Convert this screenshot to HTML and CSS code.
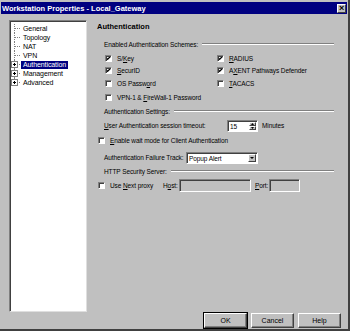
FILE: index.html
```html
<!DOCTYPE html>
<html lang="en">
<head>
    <meta charset="UTF-8">
    <link rel="stylesheet" href="styles.css">
    <title>Workstation Properties - Local_Gateway</title>
</head>
<body>
    <div class="window">
        <div class="titlebar">
            <span class="title">Workstation Properties - Local_Gateway</span>
            <span class="close">&#215;</span>
        </div>

        <div class="main">
            <div class="tree">
                <ul>
                    <li><span class="branch"></span><span class="label">General</span></li>
                    <li><span class="branch"></span><span class="label">Topology</span></li>
                    <li><span class="branch"></span><span class="label">NAT</span></li>
                    <li><span class="branch"></span><span class="label">VPN</span></li>
                    <li><span class="branch"><span class="plus"></span></span><span class="label selected">Authentication</span></li>
                    <li><span class="branch"><span class="plus"></span></span><span class="label">Management</span></li>
                    <li class="last"><span class="branch"><span class="plus"></span></span><span class="label">Advanced</span></li>
                </ul>
            </div>

            <div class="page">
                <div class="heading">Authentication</div>

                <div class="group-title first"><span>Enabled Authentication Schemes:</span><span class="rule"></span></div>
                <div class="schemes">
                    <label class="check"><span class="box on"></span><span>S/<u>K</u>ey</span></label>
                    <label class="check"><span class="box on"></span><span><u>R</u>ADIUS</span></label>
                    <label class="check"><span class="box on"></span><span><u>S</u>ecurID</span></label>
                    <label class="check"><span class="box on"></span><span>A<u>X</u>ENT Pathways Defender</span></label>
                    <label class="check"><span class="box"></span><span>OS Passw<u>o</u>rd</span></label>
                    <label class="check"><span class="box"></span><span><u>T</u>ACACS</span></label>
                    <label class="check"><span class="box"></span><span>VPN-1 &amp; <u>F</u>ireWall-1 Password</span></label>
                </div>

                <div class="group-title"><span>Authentication Settings:</span><span class="rule"></span></div>
                <div class="row timeout">
                    <span class="field-label wide"><u>U</u>ser Authentication session timeout:</span>
                    <span class="spin"><span class="value">15</span><span class="arrows"><span class="up"></span><span class="down"></span></span></span>
                    <span class="unit">Minutes</span>
                </div>
                <div class="row wait">
                    <label class="check"><span class="box"></span><span><u>E</u>nable wait mode for Client Authentication</span></label>
                </div>
                <div class="row track">
                    <span class="field-label">Authentication Failure Track:</span>
                    <span class="select"><span class="value">Popup Alert</span><span class="drop"></span></span>
                </div>

                <div class="group-title http"><span>HTTP Security Server:</span><span class="rule"></span></div>
                <div class="row proxy">
                    <label class="check"><span class="box"></span><span>Use <u>N</u>ext proxy</span></label>
                    <span class="host-label">H<u>o</u>st:</span>
                    <span class="text-box host"></span>
                    <span class="port-label"><u>P</u>ort:</span>
                    <span class="text-box port"></span>
                </div>
            </div>
        </div>

        <div class="footer">
            <button class="btn default">OK</button>
            <button class="btn">Cancel</button>
            <button class="btn">Help</button>
        </div>
    </div>
</body>
</html>
```

FILE: styles.css
```css
body {
    margin: 0;
    background-color: #c0c0c0;
    font-family: 'Liberation Sans', Arial, sans-serif;
    font-size: 6.5px;
    letter-spacing: -0.1px;
    color: #000;
}

.window {
    width: 350px;
    height: 331px;
    box-sizing: border-box;
    padding: 1px 1px 0 1px;
    border-right: 2px solid #404040;
    border-bottom: 2px solid #404040;
    background-color: #c0c0c0;
    display: flex;
    flex-direction: column;
}

/* title bar */
.titlebar {
    height: 12px;
    margin-top: 1px;
    background-color: #000080;
    display: flex;
    align-items: center;
    justify-content: space-between;
    padding: 0 1px 0 1px;
}

.title {
    color: #fff;
    font-weight: bold;
    font-size: 7.5px;
    letter-spacing: 0;
}

.close {
    width: 9px;
    height: 9px;
    box-sizing: border-box;
    background-color: #c0c0c0;
    border: 1px solid;
    border-color: #fff #404040 #404040 #fff;
    font-size: 9px;
    font-weight: bold;
    line-height: 6px;
    text-align: center;
    color: #000;
}

/* main area */
.main {
    display: flex;
    margin-top: 6px;
    padding-left: 8px;
    height: 292px;
}

.tree {
    width: 78px;
    height: 292px;
    box-sizing: border-box;
    background-color: #fff;
    border: 1px solid;
    border-color: #808080 #dfdfdf #dfdfdf #808080;
    box-shadow: inset 1px 1px 0 #404040;
    padding: 3px 0 0 4px;
}

.tree ul {
    list-style: none;
    margin: 0;
    padding: 0;
}

.tree li {
    display: flex;
    align-items: center;
    height: 9px;
}

.branch {
    position: relative;
    width: 6px;
    height: 9px;
    box-sizing: border-box;
    border-left: 1px dotted #808080;
    display: flex;
    align-items: center;
}

.tree li.last .branch {
    height: 5px;
    align-self: flex-start;
    align-items: flex-end;
}

.branch::after {
    content: '';
    width: 5px;
    border-top: 1px dotted #808080;
}

.plus {
    position: absolute;
    left: -4px;
    top: 1px;
    width: 7px;
    height: 7px;
    box-sizing: border-box;
    background-color: #fff;
    border: 1px solid #808080;
    background-image: linear-gradient(#000, #000), linear-gradient(#000, #000);
    background-size: 3px 1px, 1px 3px;
    background-position: center, center;
    background-repeat: no-repeat;
    z-index: 1;
}

.label {
    padding: 0 2px;
    margin-left: 1px;
    line-height: 8px;
    font-size: 7px;
    white-space: nowrap;
}

.label.selected {
    background-color: #000080;
    color: #fff;
}

/* property page */
.page {
    flex: 1;
    padding: 0 13px 0 10px;
}

.heading {
    font-weight: bold;
    font-size: 7.5px;
    letter-spacing: 0;
    height: 14px;
    line-height: 14px;
}

.group-title {
    display: flex;
    align-items: center;
    height: 10px;
    margin-top: 2px;
    padding-left: 7px;
    white-space: nowrap;
}

.group-title.first {
    margin-top: 5px;
}

.rule {
    flex: 1;
    margin-left: 4px;
    border-top: 1px solid #808080;
    border-bottom: 1px solid #fff;
}

.schemes {
    display: grid;
    grid-template-columns: 112px auto;
    grid-template-rows: 12px 13px 13px 14px;
    padding-left: 8px;
    margin-top: 3px;
}

.check {
    display: flex;
    align-items: center;
    white-space: nowrap;
}

.box {
    width: 7px;
    height: 7px;
    box-sizing: border-box;
    margin-right: 5px;
    background-color: #fff;
    border: 1px solid;
    border-color: #808080 #fff #fff #808080;
    box-shadow: inset 1px 1px 0 #404040;
    flex: none;
}

.box.on {
    background-image: url("data:image/svg+xml,%3Csvg xmlns='http://www.w3.org/2000/svg' width='7' height='7'%3E%3Cpath d='M1.2 2.8 L2.6 4.4 L5.6 1.2' fill='none' stroke='black' stroke-width='1.3'/%3E%3C/svg%3E");
    background-repeat: no-repeat;
    background-position: -1px -1px;
}

.row {
    display: flex;
    align-items: center;
    height: 13px;
    white-space: nowrap;
}

.row .check {
    padding-left: 1px;
}

.timeout {
    margin-top: 3px;
    padding-left: 7px;
}

.wait {
    margin-top: 2px;
}

.field-label {
    width: 82px;
    flex: none;
}

.field-label.wide {
    width: 123px;
}

.spin, .select {
    display: flex;
    height: 12px;
    box-sizing: border-box;
    background-color: #fff;
    border: 1px solid;
    border-color: #808080 #fff #fff #808080;
    box-shadow: inset 1px 1px 0 #404040;
    padding: 1px 1px 1px 2px;
    align-items: stretch;
    flex: none;
}

.spin {
    width: 31px;
}

.select {
    width: 72px;
}

.spin .value, .select .value {
    flex: 1;
    line-height: 9px;
}

.arrows {
    width: 7px;
    display: flex;
    flex-direction: column;
}

.arrows span, .drop {
    flex: 1;
    background-color: #c0c0c0;
    border: 1px solid;
    border-color: #fff #404040 #404040 #fff;
    background-repeat: no-repeat;
    background-position: center;
}

.arrows .up {
    background-image: url("data:image/svg+xml,%3Csvg xmlns='http://www.w3.org/2000/svg' width='3' height='2'%3E%3Cpath d='M0 2 L1.5 0 L3 2Z'/%3E%3C/svg%3E");
}

.arrows .down {
    background-image: url("data:image/svg+xml,%3Csvg xmlns='http://www.w3.org/2000/svg' width='3' height='2'%3E%3Cpath d='M0 0 L1.5 2 L3 0Z'/%3E%3C/svg%3E");
}

.drop {
    flex: none;
    width: 8px;
    box-sizing: border-box;
    background-image: url("data:image/svg+xml,%3Csvg xmlns='http://www.w3.org/2000/svg' width='4' height='2'%3E%3Cpath d='M0 0 L2 2 L4 0Z'/%3E%3C/svg%3E");
}

.unit {
    margin-left: 4px;
}

.track {
    margin-top: 4px;
    padding-left: 7px;
}

.group-title.http {
    margin-top: 2px;
}

.proxy {
    margin-top: 3px;
}

.proxy .check {
    width: 66px;
    box-sizing: border-box;
    flex: none;
}

.host-label {
    width: 16px;
    flex: none;
}

.text-box {
    height: 13px;
    box-sizing: border-box;
    border: 1px solid;
    border-color: #808080 #fff #fff #808080;
    box-shadow: inset 1px 1px 0 #404040;
    background-color: #c0c0c0;
    flex: none;
}

.host {
    width: 72px;
}

.port-label {
    margin-left: 4px;
    width: 14px;
    flex: none;
}

.port {
    width: 31px;
}

/* buttons */
.footer {
    display: flex;
    justify-content: flex-end;
    gap: 4px;
    margin-top: 1px;
    padding-right: 6px;
}

.btn {
    width: 43px;
    height: 15px;
    padding: 0;
    font-family: inherit;
    font-size: 7px;
    color: #000;
    background-color: #c0c0c0;
    border: 1px solid;
    border-color: #fff #404040 #404040 #fff;
    box-shadow: inset -1px -1px 0 #808080;
}

.btn.default {
    outline: 1px solid #000;
    outline-offset: 0;
}
```
